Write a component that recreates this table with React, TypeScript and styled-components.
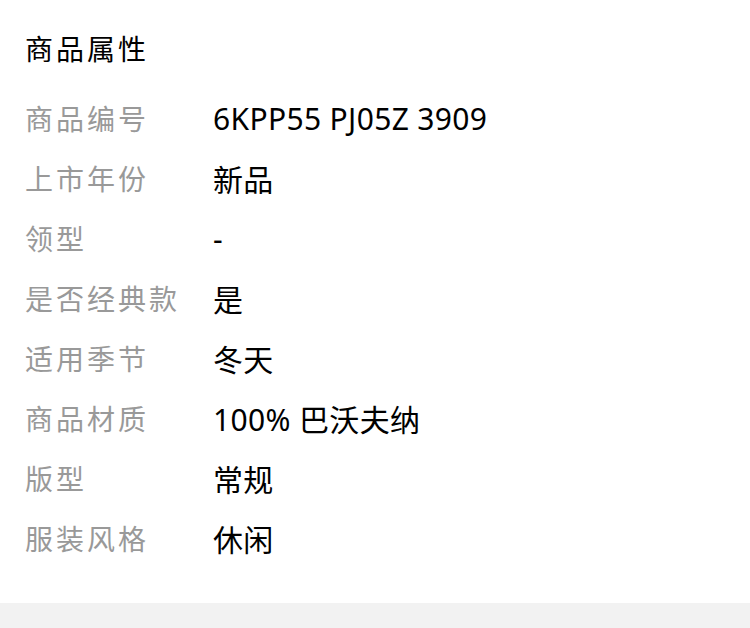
import React from "react";
import styled, { createGlobalStyle } from "styled-components";

const Global = createGlobalStyle`
  html, body { margin: 0; padding: 0; background: #ffffff; }
  body { font-family: "Noto Sans", "Noto Sans CJK SC", sans-serif; }
`;

const Page = styled.div`
  width: 750px;
  min-height: 628px;
  background: #f2f2f2;
`;

const Section = styled.section`
  background: #ffffff;
  padding: 19px 25px 35px;
`;

const Title = styled.h2`
  margin: 0 0 9px;
  font-size: 28px;
  font-weight: 400;
  line-height: 60px;
  color: #000000;
  letter-spacing: 3px;
`;

const List = styled.dl`
  margin: 0;
  display: flex;
  flex-direction: column;
`;

const Row = styled.div`
  display: flex;
  align-items: center;
  height: 60px;
`;

const Label = styled.dt`
  width: 188px;
  flex: none;
  font-size: 28px;
  color: #999999;
  letter-spacing: 3px;
`;

const Value = styled.dd`
  margin: 0;
  font-size: 30px;
  color: #000000;
  letter-spacing: 0.35px;
`;

const rows: [string, string][] = [
  ["商品编号", "6KPP55 PJ05Z 3909"],
  ["上市年份", "新品"],
  ["领型", "-"],
  ["是否经典款", "是"],
  ["适用季节", "冬天"],
  ["商品材质", "100% 巴沃夫纳"],
  ["版型", "常规"],
  ["服装风格", "休闲"],
];

export default function App() {
  return (
    <Page>
      <Global />
      <Section>
        <Title>商品属性</Title>
        <List>
          {rows.map(([k, v]) => (
            <Row key={k}>
              <Label>{k}</Label>
              <Value>{v}</Value>
            </Row>
          ))}
        </List>
      </Section>
    </Page>
  );
}
